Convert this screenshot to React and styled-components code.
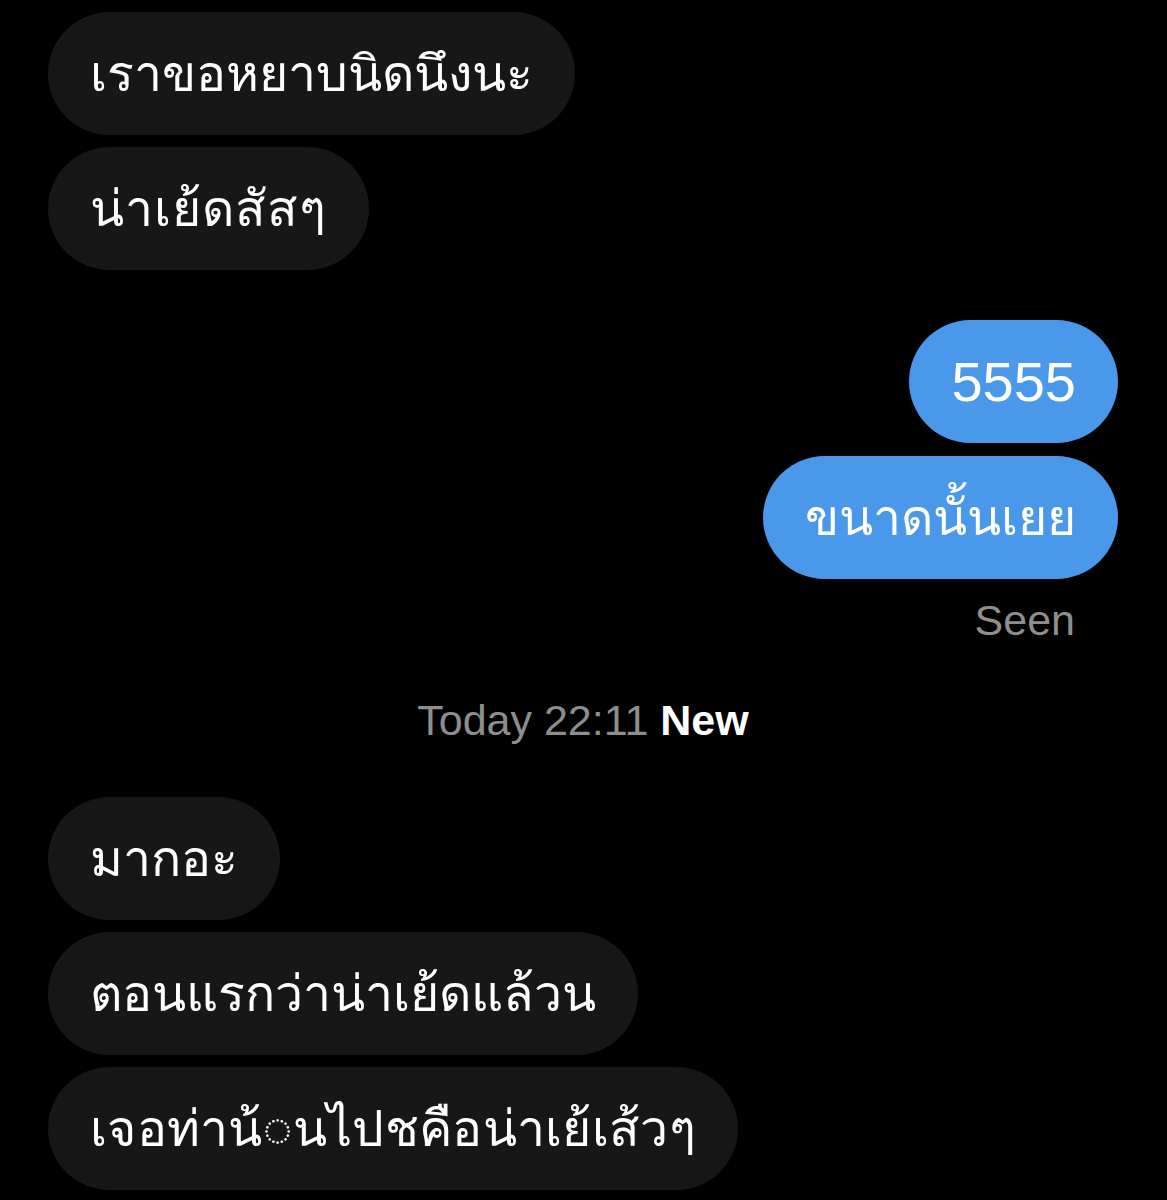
import styled, { createGlobalStyle } from "styled-components";

const GlobalStyle = createGlobalStyle`
  html, body {
    margin: 0;
    padding: 0;
    background: #000;
  }
  body {
    font-family: "Noto Sans", "DejaVu Sans", sans-serif;
  }
`;

const Thread = styled.div`
  display: flex;
  flex-direction: column;
  padding: 12px 49px 12px 48px;
  min-height: 1200px;
  box-sizing: border-box;
  background: #000;
`;

const Bubble = styled.div`
  align-self: ${props => props.mine ? 'flex-end' : 'flex-start'};
  height: 123px;
  box-sizing: border-box;
  display: flex;
  align-items: center;
  padding: 0 42px;
  margin-top: ${props => props.top || 0}px;
  border-radius: 62px;
  background: ${props => props.mine ? '#4a98e9' : '#171717'};
  color: #fff;
  font-size: ${props => props.digits ? 56 : 50}px;
  letter-spacing: ${props => props.wide || 0}px;
  font-family: ${props => props.digits ? '"Liberation Sans", Arial' : '"Noto Sans", "DejaVu Sans"'}, sans-serif;
  white-space: nowrap;
`;

const Seen = styled.div`
  align-self: flex-end;
  margin: 19px 43px 0 0;
  color: #8e8e8e;
  font-family: "Liberation Sans", Arial, sans-serif;
  font-size: 43px;
  line-height: 44px;
`;

const Stamp = styled.div`
  align-self: center;
  margin: 53px 0 52px;
  color: #8e8e8e;
  font-family: "Liberation Sans", Arial, sans-serif;
  font-size: 43px;
  line-height: 50px;
`;

const NewMark = styled.span`
  color: #fff;
  font-weight: 600;
`;

export default function App() {
  return (
    <>
      <GlobalStyle />
      <Thread>
        <Bubble>เราขอหยาบนิดนึงนะ</Bubble>
        <Bubble top={12} wide={1}>น่าเย้ดสัสๆ</Bubble>
        <Bubble mine digits top={50}>5555</Bubble>
        <Bubble mine top={13}>ขนาดนั้นเยย</Bubble>
        <Seen>Seen</Seen>
        <Stamp>Today 22:11 <NewMark>New</NewMark></Stamp>
        <Bubble>มากอะ</Bubble>
        <Bubble top={12}>ตอนแรกว่าน่าเย้ดแล้วน</Bubble>
        <Bubble top={12} wide={0.3}>เจอท่าน้◌นไปชคือน่าเย้เส้วๆ</Bubble>
      </Thread>
    </>
  );
}
